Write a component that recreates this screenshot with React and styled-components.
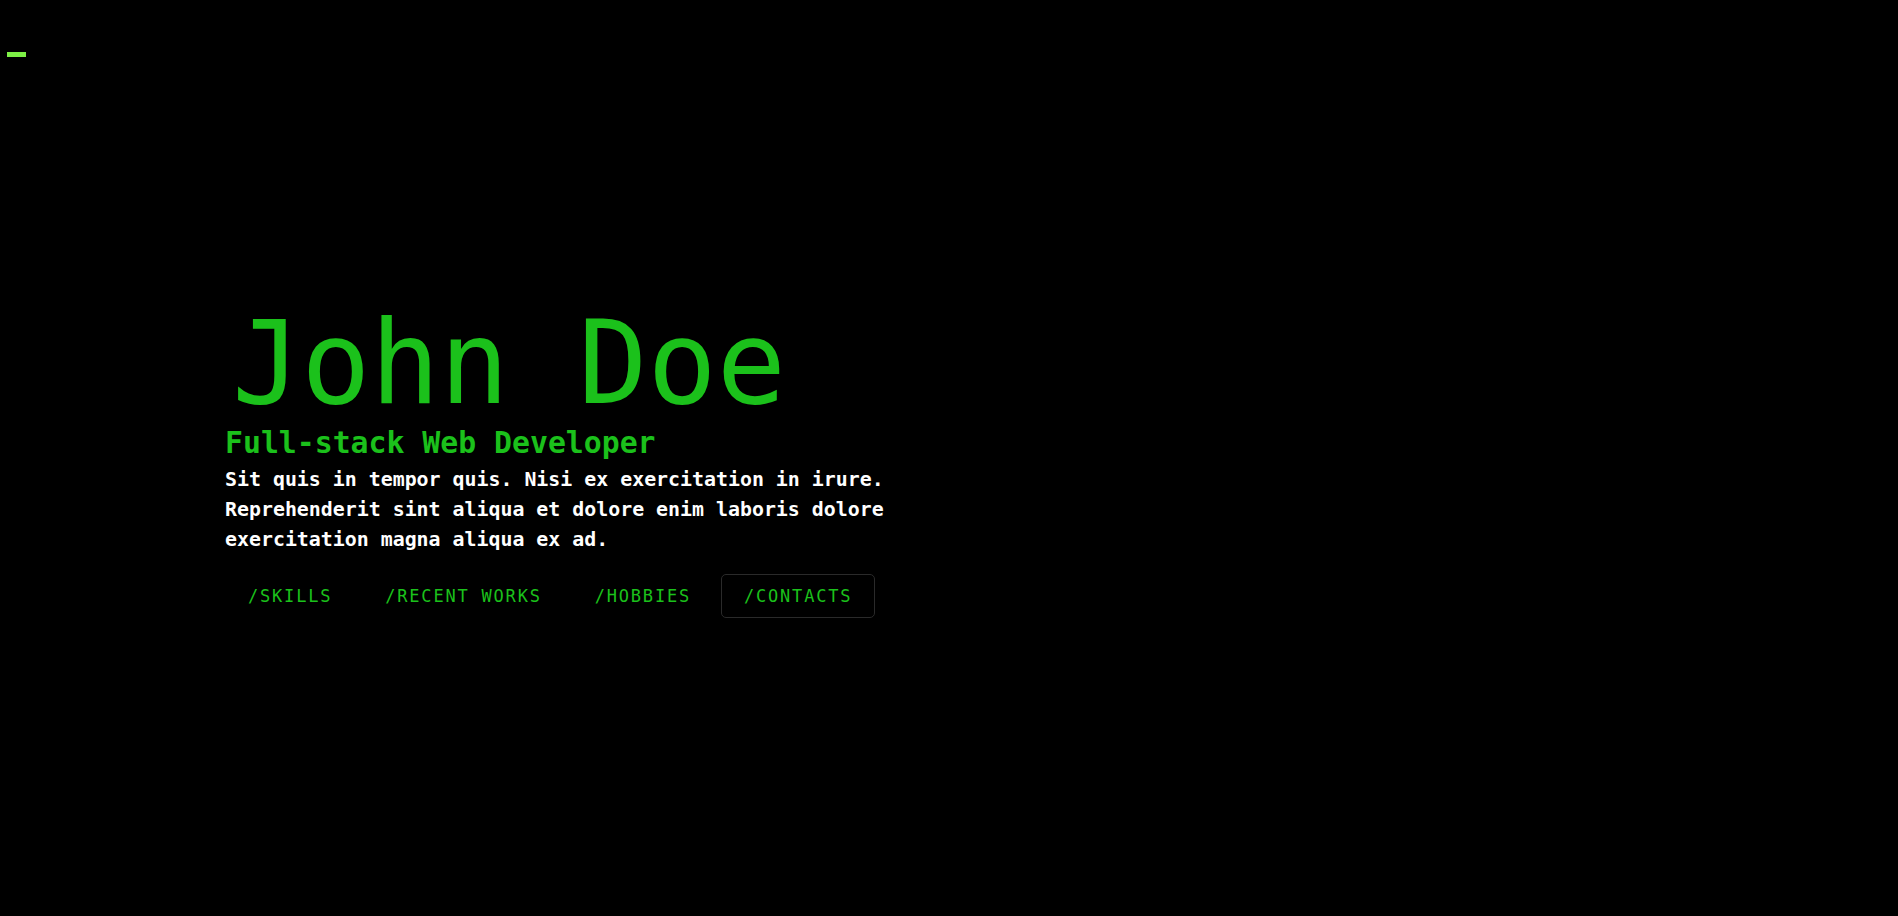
import React from "react";
import styled, { createGlobalStyle, keyframes } from "styled-components";

const GlobalStyle = createGlobalStyle`
  html, body {
    margin: 0;
    padding: 0;
    background: #000;
  }
  body {
    font-family: "DejaVu Sans Mono", "Liberation Mono", monospace;
    color: #fff;
  }
`;

const blink = keyframes`
  0%, 49% { opacity: 1; }
  50%, 100% { opacity: 0; }
`;

const Page = styled.div`
  height: 916px;
  display: grid;
  grid-template-rows: 60px 1fr;
  background: #000;
  overflow: hidden;
`;

const Header = styled.header`
  padding: 52px 0 0 7px;
`;

const Cursor = styled.div`
  width: 19px;
  height: 5px;
  background: #7ef046;
  animation: ${blink} 1s step-end infinite;
  animation-play-state: paused;
`;

const Hero = styled.main`
  display: flex;
  flex-direction: column;
  justify-content: flex-start;
  padding: 246px 0 0 225px;
`;

const Name = styled.h1`
  margin: 0 0 0 7px;
  font-size: 115px;
  font-weight: 400;
  line-height: 1;
  color: #1bc11b;
`;

const Title = styled.h2`
  margin: 4px 0 0;
  font-size: 29.8px;
  font-weight: 700;
  line-height: 36px;
  color: #1bc11b;
`;

const Bio = styled.p`
  margin: 4px 0 0;
  max-width: 680px;
  font-size: 19.9px;
  font-weight: 700;
  line-height: 30px;
  color: #fff;
`;

const Nav = styled.nav`
  display: flex;
  gap: 7px;
  margin-top: 19px;
`;

const NavLink = styled.a`
  display: inline-flex;
  align-items: center;
  height: 44px;
  box-sizing: border-box;
  padding: 0 22px;
  border: 1px solid ${(props) => (props.$active ? "#2a2a2a" : "transparent")};
  border-radius: 5px;
  font-size: 17px;
  letter-spacing: 1.8px;
  color: #1bc11b;
  text-decoration: none;
  text-transform: uppercase;
  cursor: pointer;
`;

const links = ["/skills", "/recent works", "/hobbies", "/contacts"];

const App = () => {
  return (
    <>
      <GlobalStyle />
      <Page>
        <Header>
          <Cursor />
        </Header>
        <Hero>
          <Name>John Doe</Name>
          <Title>Full-stack Web Developer</Title>
          <Bio>
            Sit quis in tempor quis. Nisi ex exercitation in irure.
            Reprehenderit sint aliqua et dolore enim laboris dolore
            exercitation magna aliqua ex ad.
          </Bio>
          <Nav>
            {links.map((link) => (
              <NavLink key={link} $active={link === "/contacts"}>
                {link}
              </NavLink>
            ))}
          </Nav>
        </Hero>
      </Page>
    </>
  );
};

export default App;
